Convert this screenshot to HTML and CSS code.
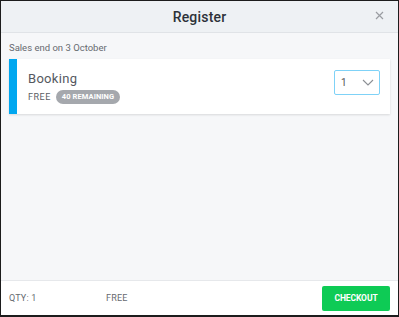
FILE: index.html
```html
<!DOCTYPE html>
<html>
<head>
<meta charset="utf-8">
<link rel="stylesheet" href="styles.css">
</head>
<body>
<div class="modal">
  <header class="modal-header">
    <h1 class="title">Register</h1>
    <button class="close" aria-label="Close">
      <svg width="9" height="9" viewBox="0 0 9 9"><path d="M1 1L8 8M8 1L1 8" stroke="#9a9da2" stroke-width="1.2" fill="none"/></svg>
    </button>
  </header>
  <main class="modal-body">
    <p class="sales-end">Sales end on 3 October</p>
    <div class="ticket">
      <div class="ticket-bar"></div>
      <div class="ticket-info">
        <div class="ticket-name">Booking</div>
        <div class="ticket-meta">
          <span class="price">FREE</span>
          <span class="badge">40 REMAINING</span>
        </div>
      </div>
      <div class="qty-select">
        <span class="qty-value">1</span>
        <svg width="12" height="7" viewBox="0 0 12 7"><path d="M1 1L6 6L11 1" stroke="#8c8f94" stroke-width="1.1" fill="none"/></svg>
      </div>
    </div>
  </main>
  <footer class="modal-footer">
    <span class="qty">QTY: 1</span>
    <span class="total">FREE</span>
    <button class="checkout">CHECKOUT</button>
  </footer>
</div>
</body>
</html>
```
FILE: styles.css
```css
* { box-sizing: border-box; }
html, body { margin: 0; padding: 0; }
body {
  font-family: Roboto, "Liberation Sans", sans-serif;
  width: 399px;
  height: 317px;
  overflow: hidden;
}
.modal {
  width: 399px;
  height: 317px;
  border: 1px solid #1c1c1c;
  border-bottom-width: 2px;
  display: flex;
  flex-direction: column;
  background: #f6f7f9;
}
.modal-header {
  height: 32px;
  flex: none;
  background: #eef1f4;
  border-bottom: 1px solid #e0e3e7;
  display: flex;
  align-items: center;
  justify-content: center;
  position: relative;
}
.title {
  margin: 0;
  font-size: 14px;
  font-weight: 500;
  color: #2d3239;
  letter-spacing: 0.2px;
}
.close {
  position: absolute;
  right: 14px;
  top: 10px;
  border: 0;
  background: none;
  padding: 0;
  width: 9px;
  height: 9px;
  display: flex;
}
.modal-body {
  flex: 1;
  padding: 9px 8px 0 8px;
}
.sales-end {
  margin: 0 0 5px 0;
  font-size: 9.5px;
  color: #666a70;
  line-height: 12px;
}
.ticket {
  display: flex;
  align-items: flex-start;
  background: #fff;
  height: 55px;
  box-shadow: 0 1px 2px rgba(0,0,0,0.12);
}
.ticket-bar {
  width: 8px;
  align-self: stretch;
  background: #00a7f0;
}
.ticket-info {
  flex: 1;
  padding: 12px 0 0 11px;
}
.ticket-name {
  font-size: 13px;
  font-weight: 400;
  color: #55595f;
  line-height: 16px;
  letter-spacing: 0.3px;
}
.ticket-meta {
  display: flex;
  align-items: center;
  margin-top: 3px;
  gap: 5px;
}
.price {
  font-size: 9px;
  color: #5a5e64;
  letter-spacing: 0.5px;
}
.badge {
  background: #a5a8ad;
  color: #fff;
  font-size: 7.5px;
  font-weight: 700;
  border-radius: 7px;
  padding: 3px 6px;
  line-height: 7.5px;
  letter-spacing: 0.1px;
}
.qty-select {
  width: 46px;
  height: 25px;
  margin: 11px 10px 0 0;
  border: 1px solid #7fd2f7;
  border-radius: 2px;
  display: flex;
  align-items: center;
  justify-content: space-between;
  padding: 0 5px 0 6px;
}
.qty-value {
  font-size: 10px;
  color: #555;
}
.modal-footer {
  height: 35px;
  flex: none;
  background: #fff;
  border-top: 1px solid #e6e8eb;
  display: flex;
  align-items: center;
  padding: 0 8px 0 8px;
}
.qty, .total {
  font-size: 9px;
  color: #666a70;
  letter-spacing: 0.2px;
}
.qty { width: 97px; }
.total { flex: 1; }
.checkout {
  width: 68px;
  height: 25px;
  border: 0;
  border-radius: 2px;
  background: #0ecb55;
  color: #fff;
  font-family: Roboto, "Liberation Sans", sans-serif;
  font-size: 8.5px;
  font-weight: 700;
  padding: 0;
  letter-spacing: -0.1px;
}
```
